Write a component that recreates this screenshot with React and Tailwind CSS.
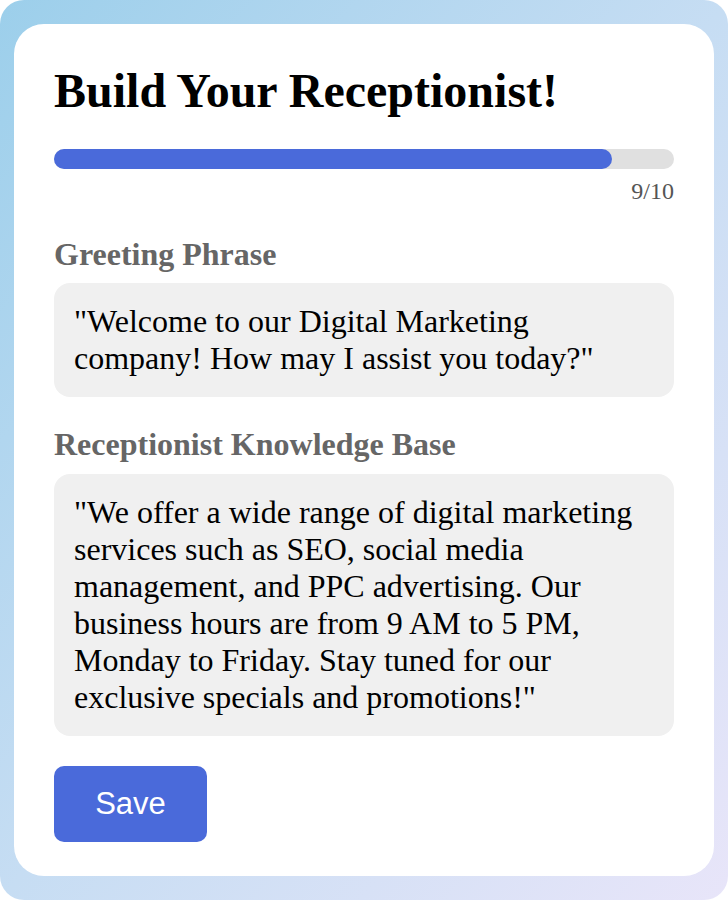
import React from 'react';

const serif = { fontFamily: '"Liberation Serif", "Times New Roman", serif' };

export default function App() {
  const step = 9;
  const total = 10;

  return (
    <div className="w-[728px] h-[900px] bg-white">
      <div className="w-full h-full rounded-[24px] bg-gradient-to-br from-[#9ccfeb] via-[#c6ddf3] to-[#e8e5f9] px-[14px] pt-[24px] pb-[24px]">
        <div className="h-full bg-white rounded-[30px] px-[40px] pt-[40px]" style={serif}>
          <h1 className="text-[48px] font-bold leading-[53px] text-black">Build Your Receptionist!</h1>

          <div className="mt-[32px] h-[20px] w-full rounded-full bg-[#e0e0e0]">
            <div className="h-full rounded-full bg-[#4a6ada]" style={{ width: `${(step / total) * 100}%` }} />
          </div>
          <div className="mt-[7px] text-right text-[24px] leading-[30px] text-[#555]">{step}/{total}</div>

          <label className="block mt-[28px] text-[32px] font-bold leading-[40px] text-[#666]">Greeting Phrase</label>
          <div className="mt-[9px] rounded-[16px] bg-[#f0f0f0] px-[20px] py-[20px] text-[32px] leading-[37px] text-black">
            "Welcome to our Digital Marketing company! How may I assist you today?"
          </div>

          <label className="block mt-[27px] text-[32px] font-bold leading-[40px] text-[#666]">Receptionist Knowledge Base</label>
          <div className="mt-[10px] rounded-[16px] bg-[#f0f0f0] px-[20px] py-[20px] text-[32px] leading-[37px] text-black">
            "We offer a wide range of digital marketing services such as SEO, social media management, and PPC advertising. Our business hours are from 9 AM to 5 PM, Monday to Friday. Stay tuned for our exclusive specials and promotions!"
          </div>

          <button
            className="mt-[30px] w-[153px] h-[76px] rounded-[10px] bg-[#4a6ada] text-white text-[31px]"
            style={{ fontFamily: '"Liberation Sans", Arial, sans-serif' }}
          >
            Save
          </button>
        </div>
      </div>
    </div>
  );
}
